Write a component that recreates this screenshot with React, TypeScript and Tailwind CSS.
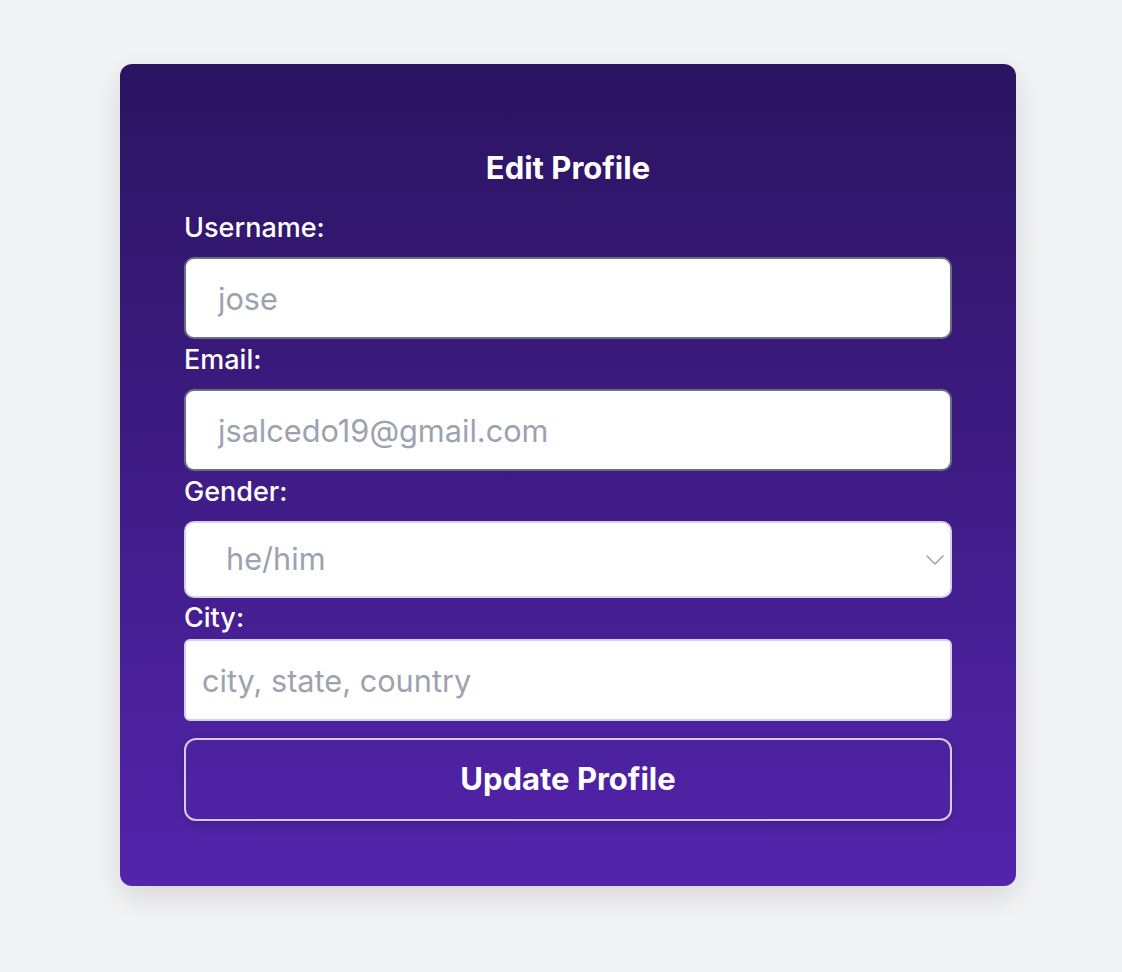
import { ChevronDown } from "lucide-react";

const font = { fontFamily: "Inter, 'Noto Sans', sans-serif" };

export default function App() {
  return (
    <div className="min-h-screen w-full bg-[#f2f3f5] pt-16 pl-[14px]" style={font}>
      <div className="mx-auto w-[896px] rounded-xl bg-linear-to-b from-[#2b1461] to-[#5324ac] px-16 pt-[88px] pb-[65px] shadow-[0_10px_30px_rgba(0,0,0,0.12)]">
        <form className="flex flex-col">
          {/* Title */}
          <h2 className="text-center text-[31px] leading-8 font-bold text-white">Edit Profile</h2>

          {/* Username */}
          <label className="mt-7 text-[27px] leading-8 font-medium text-white">Username:</label>
          <input
            type="text"
            placeholder="jose"
            className="mt-[13px] h-[82px] w-full rounded-[10px] border-2 border-[#6b7080] bg-white px-8 text-[30.7px] text-gray-700 placeholder:text-[#9ca3af] outline-none"
          />

          {/* Email */}
          <label className="mt-[5px] text-[27px] leading-8 font-medium text-white">Email:</label>
          <input
            type="email"
            placeholder="jsalcedo19@gmail.com"
            className="mt-[13px] h-[82px] w-full rounded-[10px] border-2 border-[#6b7080] bg-white px-8 text-[30.7px] text-gray-700 placeholder:text-[#9ca3af] outline-none"
          />

          {/* Gender */}
          <label className="mt-[5px] text-[27px] leading-8 font-medium text-white">Gender:</label>
          <div className="relative mt-[13px]">
            <select
              defaultValue="he/him"
              className="h-[77px] w-full appearance-none rounded-[10px] border-2 border-[#d4d0e6] bg-white pl-10 text-[30.7px] text-[#9ca3af] outline-none"
            >
              <option value="he/him">he/him</option>
              <option value="she/her">she/her</option>
              <option value="they/them">they/them</option>
            </select>
            <ChevronDown
              size={32}
              strokeWidth={1.2}
              className="pointer-events-none absolute top-1/2 right-px -translate-y-1/2 text-[#a3a3ab]"
            />
          </div>

          {/* City */}
          <label className="mt-1 text-[27px] leading-8 font-medium text-white">City:</label>
          <input
            type="text"
            placeholder="city, state, country"
            className="mt-[5px] h-[82px] w-full rounded-[6px] border-2 border-[#d4d0e6] bg-white px-4 text-[30.7px] text-gray-700 placeholder:text-[#9ca3af] outline-none"
          />

          {/* Submit */}
          <button
            type="button"
            className="mt-[17px] h-[83px] w-full rounded-xl border-2 border-[#d6cbee] text-[31px] font-bold text-white shadow-[0_4px_10px_rgba(0,0,0,0.15)]"
          >
            Update Profile
          </button>
        </form>
      </div>
    </div>
  );
}
